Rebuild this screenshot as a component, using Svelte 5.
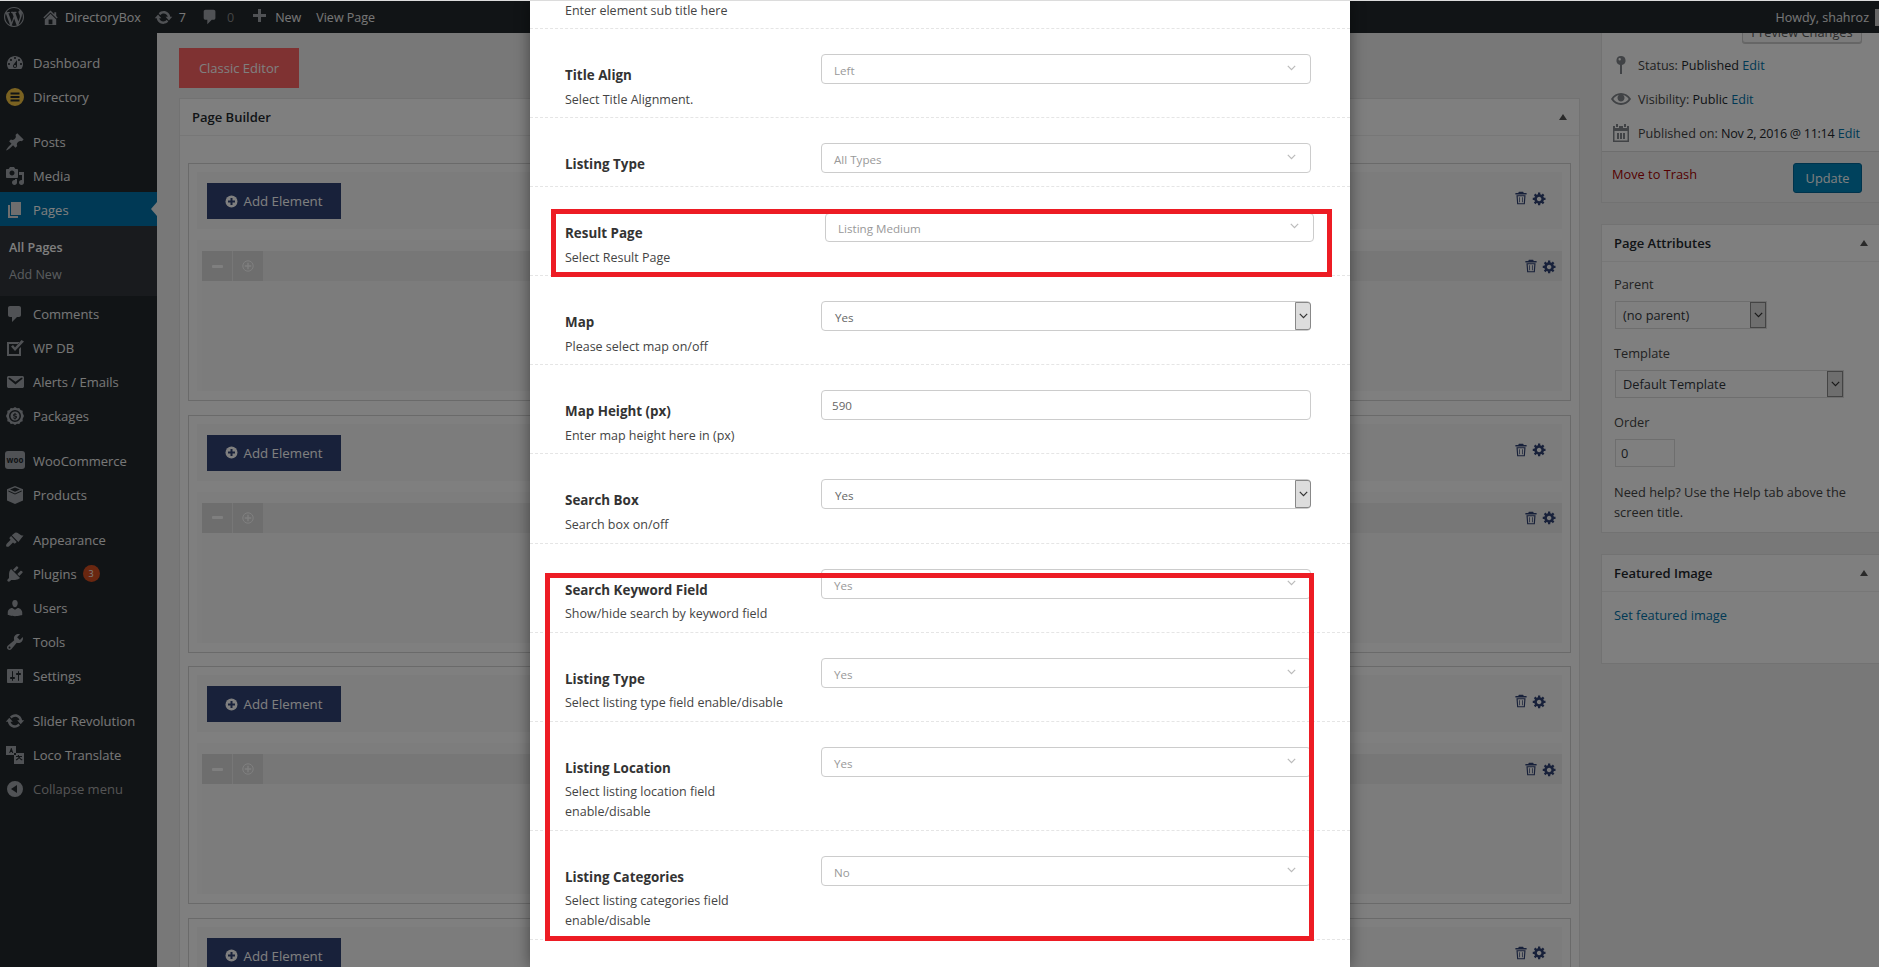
<script lang="ts">
	// WP page editor dimmed behind the "element settings" modal

	const icons: Record<string, string> = {
		dashboard: 'M3.76 16h12.48c1.1-1.37 1.76-3.11 1.76-5 0-4.42-3.58-8-8-8s-8 3.58-8 8c0 1.89.66 3.63 1.76 5zM10 4c.55 0 1 .45 1 1s-.45 1-1 1-1-.45-1-1 .45-1 1-1zM6 6c.55 0 1 .45 1 1s-.45 1-1 1-1-.45-1-1 .45-1 1-1zm8 0c.55 0 1 .45 1 1s-.45 1-1 1-1-.45-1-1 .45-1 1-1zm-5.37 5.55L12 7v6c0 1.1-.9 2-2 2s-2-.9-2-2c0-.57.24-1.08.63-1.45zM4 10c.55 0 1 .45 1 1s-.45 1-1 1-1-.45-1-1 .45-1 1-1zm12 0c.55 0 1 .45 1 1s-.45 1-1 1-1-.45-1-1 .45-1 1-1zm-5 3c0-.55-.45-1-1-1s-1 .45-1 1 .45 1 1 1 1-.45 1-1z',
		directory: 'M10 1a9 9 0 1 0 0 18 9 9 0 0 0 0-18zM5.5 5.5h9v2h-9zm0 3.5h9v2h-9zm0 3.5h9v2h-9z',
		pin: 'M10.44 3.02l1.82-1.82 6.36 6.35-1.83 1.82c-1.05-.68-2.48-.57-3.41.36l-.75.75c-.92.93-1.04 2.35-.35 3.41l-1.83 1.82-2.41-2.41-2.8 2.79c-.42.42-3.38 2.71-3.8 2.29s1.86-3.39 2.28-3.81l2.79-2.79L4.1 9.36l1.83-1.82c1.05.69 2.48.57 3.4-.36l.75-.75c.93-.92 1.05-2.35.36-3.41z',
		media: 'M13 11V4c0-.55-.45-1-1-1h-1.67L9 1H5L3.67 3H2c-.55 0-1 .45-1 1v7c0 .55.45 1 1 1h10c.55 0 1-.45 1-1zM7 4.5c1.38 0 2.5 1.12 2.5 2.5S8.38 9.5 7 9.5 4.5 8.38 4.5 7 5.62 4.5 7 4.5zM14 6h5v10.5c0 1.38-1.12 2.5-2.5 2.5S14 17.88 14 16.5s1.12-2.5 2.5-2.5c.17 0 .34.02.5.05V9h-3V6zm-4 8.05V13h2v3.5c0 1.38-1.12 2.5-2.5 2.5S7 17.88 7 16.5 8.12 14 9.5 14c.17 0 .34.02.5.05z',
		pages: 'M6 15V2h10v13H6zm-1 1h8v2H3V5h2v11z',
		comment: 'M5 2h9c1.1 0 2 .9 2 2v7c0 1.1-.9 2-2 2h-2l-5 5v-5H5c-1.1 0-2-.9-2-2V4c0-1.1.9-2 2-2z',
		check: 'M2 4h12v2H4v10h10v-5l2-2v9H2V4zm6 3l2 2.5L16.5 2 19 3.5 10 13 6 8.5z',
		email: 'M3.87 4h13.25C18.37 4 19 4.59 19 5.79v8.42c0 1.19-.63 1.79-1.88 1.79H3.87c-1.25 0-1.88-.6-1.88-1.79V5.79c0-1.2.63-1.79 1.88-1.79zm6.62 8.6l6.74-5.53c.24-.2.43-.66.13-1.07-.29-.41-.82-.42-1.17-.17l-5.7 3.86L4.8 5.83c-.35-.25-.88-.24-1.17.17-.3.41-.11.87.13 1.07z',
		packages: 'M10 1l2 1.2 2.3-.3 1.2 2 2.2.9-.1 2.3L19 10l-1.4 2.9.1 2.3-2.2.9-1.2 2-2.3-.3L10 19l-2-1.2-2.3.3-1.2-2-2.2-.9.1-2.3L1 10l1.4-2.9-.1-2.3 2.2-.9 1.2-2 2.3.3zm0 3a6 6 0 1 0 0 12 6 6 0 0 0 0-12zm0 1.5a4.5 4.5 0 1 1 0 9 4.5 4.5 0 0 1 0-9zM9.5 7v.7c-.9.2-1.4.8-1.4 1.5 0 1.7 2.6 1.1 2.6 2 0 .3-.3.5-.8.5s-1-.2-1.4-.5l-.4.9c.4.3.9.5 1.4.6v.8h1v-.8c.9-.2 1.5-.8 1.5-1.6 0-1.7-2.6-1.2-2.6-2 0-.3.3-.4.7-.4s.8.1 1.2.4l.4-.9c-.4-.3-.8-.4-1.2-.5V7z',
		products: 'M10 1l8 3.2v11.4L10 19l-8-3.4V4.2zM10 2.6L5 4.6l5 2.2 5-2.2zM3.4 5.6v1l6.6 2.8 6.6-2.8v-1L10 8.4z',
		brush: 'M18.5 5.5c-1.5.3-2.8-.4-3.9-1.2-1.2-.9-2-1.8-3.5-1.8-.9 0-1.4.4-2 1L6.8 5.3l6.6 6.6 5.1-6.4zM6.1 6l-1.4 1.4c-.4.4-.4 1 0 1.4l.9.9-3.4 3.6c-1 1-1.4 2.3-.8 3.1.7.8 2 .4 3-.5l3.6-3.5.9.9c.4.4 1 .4 1.4 0l1.4-1.4z',
		plugin: 'M13.11 4.36L9.87 7.6 8 5.73l3.24-3.24c.35-.34 1.05-.2 1.56.32.52.51.66 1.21.31 1.55zm-8 1.77l.91-1.12 9.01 9.01-1.19.84c-.71.71-2.63 1.16-3.82 1.16H6.14L4.9 17.26c-.59.59-1.54.59-2.12 0-.59-.58-.59-1.53 0-2.12l1.24-1.24v-3.88c0-1.13.4-3.19 1.09-3.89zm7.26 3.97l3.24-3.24c.34-.35 1.04-.21 1.55.31.52.51.66 1.21.31 1.55l-3.24 3.25z',
		users: 'M10 9.25c-2.27 0-2.73-3.44-2.73-3.44C7 4.02 7.82 2 9.97 2c2.16 0 2.98 2.02 2.71 3.81 0 0-.41 3.44-2.68 3.44zm0 2.57L12.72 10c2.39 0 4.52 2.33 4.52 4.53v2.49s-3.65 1.13-7.24 1.13c-3.65 0-7.24-1.13-7.24-1.13v-2.49c0-2.25 1.94-4.48 4.47-4.48z',
		tools: 'M16.68 9.77c-1.34 1.34-3.3 1.67-4.95.99l-5.41 6.52c-.99.99-2.59.99-3.58 0s-.99-2.59 0-3.57l6.52-5.42c-.68-1.65-.35-3.61.99-4.95 1.28-1.28 3.12-1.62 4.72-1.06l-2.89 2.89 2.82 2.82 2.86-2.87c.53 1.58.18 3.39-1.08 4.67zM3.81 16.21c.4.39 1.04.39 1.43 0 .4-.4.4-1.04 0-1.43-.39-.4-1.03-.4-1.43 0-.39.39-.39 1.03 0 1.43z',
		settings: 'M18 16V4c0-.55-.45-1-1-1H3c-.55 0-1 .45-1 1v12c0 .55.45 1 1 1h14c.55 0 1-.45 1-1zM8 11h1c.55 0 1 .45 1 1s-.45 1-1 1H8v1.5c0 .28-.22.5-.5.5s-.5-.22-.5-.5V13H6c-.55 0-1-.45-1-1s.45-1 1-1h1V5.5c0-.28.22-.5.5-.5s.5.22.5.5V11zm5-2h-1c-.55 0-1-.45-1-1s.45-1 1-1h1V5.5c0-.28.22-.5.5-.5s.5.22.5.5V7h1c.55 0 1 .45 1 1s-.45 1-1 1h-1v5.5c0 .28-.22.5-.5.5s-.5-.22-.5-.5V9z',
		update: 'M10.2 3.28c3.53 0 6.43 2.61 6.92 6h2.08l-3.5 4-3.5-4h2.32c-.45-1.97-2.21-3.45-4.32-3.45-1.45 0-2.73.71-3.54 1.78L4.95 5.66C6.23 4.2 8.11 3.28 10.2 3.28zm-.4 13.44c-3.52 0-6.43-2.61-6.92-6H.8l3.5-4c1.17 1.33 2.33 2.67 3.5 4H5.48c.45 1.97 2.21 3.45 4.32 3.45 1.45 0 2.73-.71 3.54-1.78l1.71 1.95c-1.28 1.46-3.15 2.38-5.25 2.38z',
		translate: 'M1 1h10v9H1zm3.2 7L6 3h.6l1.7 5H7.2l-.3-1H5.5l-.3 1zM9 8h10v11H9zm2 3v1h2.6c-.4.9-1.4 1.8-2.8 2.6l.5.9c1.3-.7 2.2-1.5 2.8-2.3.6.9 1.6 1.7 2.9 2.3l.5-.9c-1.4-.6-2.4-1.6-2.8-2.6H17v-1h-3v-1h-1.2v1z',
		collapse: 'M10 2a8 8 0 1 0 0 16 8 8 0 0 0 0-16zm2 4v8L6 10z',
		plus: 'M17 7v3h-5v5H9v-5H4V7h5V2h3v5h5z',
		home: 'M16 8.5l1.53 1.53-1.06 1.06L10 4.62l-6.47 6.47-1.06-1.06L10 2.5l4 4v-2h2v4zm-6-2.46l6 5.99V18H4v-5.97zM12 17v-5H8v5h4z',
		wp: 'M20 10c0-5.51-4.49-10-10-10C4.48 0 0 4.49 0 10c0 5.52 4.48 10 10 10 5.51 0 10-4.48 10-10zM7.78 15.37L4.37 6.22c.55-.02 1.17-.08 1.17-.08.5-.06.44-1.13-.06-1.11 0 0-1.45.11-2.37.11-.18 0-.37 0-.58-.01C4.12 2.69 6.87 1.11 10 1.11c2.33 0 4.45.87 6.05 2.34-.68-.11-1.65.39-1.65 1.58 0 .74.45 1.36.9 2.1.35.61.55 1.36.55 2.46 0 1.49-1.4 5-1.4 5l-3.03-8.37c.54-.02.82-.17.82-.17.5-.05.44-1.25-.06-1.22 0 0-1.44.12-2.38.12-.87 0-2.33-.12-2.33-.12-.5-.03-.56 1.2-.06 1.22l.92.08 1.26 3.41zM17.41 10c.24-.64.74-1.87.43-4.25.7 1.29 1.05 2.71 1.05 4.25 0 3.29-1.73 6.24-4.4 7.78.97-2.59 1.94-5.2 2.92-7.78zM6.1 18.09C3.12 16.65 1.11 13.53 1.11 10c0-1.3.23-2.48.72-3.59C3.25 10.3 4.67 14.2 6.1 18.09zm4.03-6.63l2.58 6.98c-.86.29-1.76.45-2.71.45-.79 0-1.57-.11-2.29-.33.81-2.38 1.62-4.74 2.42-7.1z',
		gear: 'M18 12h-2.18c-.17.7-.44 1.35-.81 1.93l1.54 1.54-2.1 2.1-1.54-1.54c-.58.36-1.23.63-1.91.79V19H8v-2.18c-.68-.16-1.33-.43-1.91-.79l-1.54 1.54-2.12-2.12 1.54-1.54c-.36-.58-.63-1.23-.79-1.91H1V9.03h2.17c.16-.7.44-1.35.8-1.94L2.43 5.55l2.1-2.1 1.54 1.54c.58-.37 1.24-.64 1.93-.81V2h3v2.18c.68.16 1.33.43 1.91.79l1.54-1.54 2.12 2.12-1.54 1.54c.36.59.64 1.24.8 1.94H18V12zm-8.5 1.5c1.66 0 3-1.34 3-3s-1.34-3-3-3-3 1.34-3 3 1.34 3 3 3z',
		trash: 'M7 1h6l1 2h4v2H2V3h4zM3.5 6h13l-1 13h-11zM5.3 7.5l.7 10h8l.7-10zM7.5 9h1v7h-1zm4 0h1v7h-1z',
		eye: 'M19.7 9.4C17.7 6 14 3.9 10 3.9S2.3 6 .3 9.4L0 10l.3.6c2 3.4 5.7 5.5 9.7 5.5s7.7-2.1 9.7-5.5l.3-.6-.3-.6zM10 14.1c-3.1 0-6-1.6-7.7-4.1C3.6 8 5.7 6.6 8 6.1c-.9.6-1.5 1.7-1.5 2.9 0 1.9 1.6 3.5 3.5 3.5s3.5-1.6 3.5-3.5c0-1.2-.6-2.2-1.5-2.9 2.3.5 4.4 1.9 5.7 3.9-1.7 2.5-4.6 4.1-7.7 4.1z',
		status: 'M10 1a4.5 4.5 0 0 0-1 8.9V19h2V9.9A4.5 4.5 0 0 0 10 1zM8.7 3a1.2 1.2 0 1 1 0 2.4 1.2 1.2 0 0 1 0-2.4z',
		calendar: 'M5 1h2v3H5zm8 0h2v3h-2zM2 3h2v2h4V3h4v2h4V3h2v16H2zm1.5 5v9.5h13V8zM6 10h2v6H6zm3 0h2v6H9zm3 0h2v6h-2z',
	};

	const menu = [
		{ label: 'Dashboard', icon: 'dashboard' },
		{ label: 'Directory', icon: 'directory', gold: true },
		{ sep: true },
		{ label: 'Posts', icon: 'pin' },
		{ label: 'Media', icon: 'media' },
		{ label: 'Pages', icon: 'pages', current: true },
		{ label: 'Comments', icon: 'comment' },
		{ label: 'WP DB', icon: 'check' },
		{ label: 'Alerts / Emails', icon: 'email' },
		{ label: 'Packages', icon: 'packages' },
		{ sep: true },
		{ label: 'WooCommerce', woo: true },
		{ label: 'Products', icon: 'products' },
		{ sep: true },
		{ label: 'Appearance', icon: 'brush' },
		{ label: 'Plugins', icon: 'plugin', badge: '3' },
		{ label: 'Users', icon: 'users' },
		{ label: 'Tools', icon: 'tools' },
		{ label: 'Settings', icon: 'settings' },
		{ sep: true },
		{ label: 'Slider Revolution', icon: 'update' },
		{ label: 'Loco Translate', icon: 'translate' },
		{ label: 'Collapse menu', icon: 'collapse', dim: true },
	];

	const rows = [
		{ label: 'Title Align', sub: 'Select Title Alignment.', value: 'Left', kind: 'chosen' },
		{ label: 'Listing Type', value: 'All Types', kind: 'chosen' },
		{ label: 'Result Page', sub: 'Select Result Page', value: 'Listing Medium', kind: 'chosen', pasted: true },
		{ label: 'Map', sub: 'Please select map on/off', value: 'Yes', kind: 'native' },
		{ label: 'Map Height (px)', sub: 'Enter map height here in (px)', value: '590', kind: 'input' },
		{ label: 'Search Box', sub: 'Search box on/off', value: 'Yes', kind: 'native' },
		{ label: 'Search Keyword Field', sub: 'Show/hide search by keyword field', value: 'Yes', kind: 'chosen' },
		{ label: 'Listing Type', sub: 'Select listing type field enable/disable', value: 'Yes', kind: 'chosen' },
		{ label: 'Listing Location', sub: 'Select listing location field enable/disable', value: 'Yes', kind: 'chosen' },
		{ label: 'Listing Categories', sub: 'Select listing categories field enable/disable', value: 'No', kind: 'chosen' },
	];

	const blocks = [1, 2, 3, 4];
</script>

{#snippet icon(name, size = 20)}
	<svg class="ico" width={size} height={size} viewBox="0 0 20 20" fill="currentColor" aria-hidden="true"><path fill-rule="evenodd" d={icons[name]} /></svg>
{/snippet}

{#snippet chevron()}
	<svg class="chev" width="9" height="6" viewBox="0 0 9 6" fill="none" stroke="currentColor" stroke-width="1.2" aria-hidden="true"><path d="M.8.8l3.7 3.9L8.2.8" /></svg>
{/snippet}

<div class="top-line"></div>
<div class="screen">
	<header class="adminbar">
		<span class="bar-item logo">{@render icon('wp', 20)}</span>
		<span class="bar-item home">{@render icon('home', 19)}<span>DirectoryBox</span></span>
		<span class="bar-item upd">{@render icon('update', 19)}<span>7</span></span>
		<span class="bar-item cmt">{@render icon('comment', 18)}<span class="zero">0</span></span>
		<span class="bar-item new">{@render icon('plus', 20)}<span>New</span></span>
		<span class="bar-item view">View Page</span>
		<span class="howdy">Howdy, shahroz</span>
		<span class="avatar"></span>
	</header>

	<div class="body">
		<nav class="sidebar">
			{#each menu as m}
				{#if m.sep}
					<div class="sep"></div>
				{:else}
					<div class="item" class:current={m.current} class:dim={m.dim}>
						{#if m.woo}
							<span class="woo"><span>woo</span></span>
						{:else}
							<span class="mi" class:gold={m.gold}>{@render icon(m.icon)}</span>
						{/if}
						<span>{m.label}</span>
						{#if m.badge}<span class="badge">{m.badge}</span>{/if}
					</div>
					{#if m.current}
						<div class="submenu">
							<div class="sub-item on">All Pages</div>
							<div class="sub-item">Add New</div>
						</div>
					{/if}
				{/if}
			{/each}
		</nav>

		<main class="content">
			<div class="left">
				<button class="classic">Classic Editor</button>
				<section class="panel builder">
					<div class="panel-head">
						<h2>Page Builder</h2>
						<span class="tri"></span>
					</div>
					<div class="builder-body">
						{#each blocks as b (b)}
							<div class="block">
								<div class="block-head">
									<button class="add">
										<svg width="13" height="13" viewBox="0 0 13 13" aria-hidden="true"><circle cx="6.5" cy="6.5" r="6" fill="currentColor" /><path d="M6.5 3v7M3 6.5h7" stroke="#304274" stroke-width="2" /></svg>
										Add Element
									</button>
									<span class="tools tools-head">{@render icon('trash', 14)}{@render icon('gear', 15)}</span>
								</div>
								<div class="block-row">
									<div class="row-bar">
										<span class="mini">
											<svg width="11" height="3" viewBox="0 0 11 3" aria-hidden="true"><rect width="11" height="3" rx="1" fill="currentColor" /></svg>
										</span>
										<span class="mini">
											<svg width="12" height="12" viewBox="0 0 12 12" fill="none" stroke="currentColor" aria-hidden="true"><circle cx="6" cy="6" r="5.2" /><path d="M6 2.8v6.4M2.8 6h6.4" stroke-width="1.4" /></svg>
										</span>
										<span class="tools tools-row">{@render icon('trash', 14)}{@render icon('gear', 15)}</span>
									</div>
									<div class="row-area"></div>
								</div>
							</div>
						{/each}
					</div>
				</section>
			</div>

			<aside class="right">
				<section class="panel publish">
					<div class="preview-wrap"><button class="preview">Preview Changes</button></div>
					<div class="meta">{@render icon('status', 20)}<span>Status: <b>Published</b> <a href="#s">Edit</a></span></div>
					<div class="meta">{@render icon('eye', 20)}<span>Visibility: <b>Public</b> <a href="#v">Edit</a></span></div>
					<div class="meta">{@render icon('calendar', 20)}<span>Published on: <b class="date">Nov 2, 2016 @ 11:14</b> <a href="#p">Edit</a></span></div>
					<div class="actions">
						<a class="trash-link" href="#t">Move to Trash</a>
						<button class="update">Update</button>
					</div>
				</section>

				<section class="panel attrs">
					<div class="panel-head">
						<h2>Page Attributes</h2>
						<span class="tri"></span>
					</div>
					<div class="attrs-body">
						<p class="field">Parent</p>
						<div class="wp-select parent"><span>(no parent)</span><span class="arrow">{@render chevron()}</span></div>
						<p class="field">Template</p>
						<div class="wp-select template"><span>Default Template</span><span class="arrow">{@render chevron()}</span></div>
						<p class="field">Order</p>
						<div class="order">0</div>
						<p class="help">Need help? Use the Help tab above the screen title.</p>
					</div>
				</section>

				<section class="panel featured">
					<div class="panel-head">
						<h2>Featured Image</h2>
						<span class="tri"></span>
					</div>
					<div class="featured-body"><a href="#f">Set featured image</a></div>
				</section>
			</aside>
		</main>
	</div>

	<div class="overlay"></div>

	<div class="modal" role="dialog" aria-modal="true">
		<div class="row cut"><p class="sub">Enter element sub title here</p></div>
		{#each rows as r}
			<div class="row">
				<div class="row-label">
					<div class="name">{r.label}</div>
					{#if r.sub}<p class="sub">{r.sub}</p>{/if}
				</div>
				<div class="row-field">
					{#if r.kind === 'input'}
						<div class="control input">{r.value}</div>
					{:else if r.kind === 'native'}
						<div class="control native"><span>{r.value}</span><span class="arrow">{@render chevron()}</span></div>
					{:else}
						<div class="control chosen" class:pasted={r.pasted}><span>{r.value}</span>{@render chevron()}</div>
					{/if}
				</div>
			</div>
		{/each}
	</div>

	<div class="mark mark-result"></div>
	<div class="mark mark-search"></div>
</div>

<style>
	:global(body) {
		margin: 0;
		background: #787878;
	}

	.top-line {
		height: 1px;
		background: #dcdcdc;
	}

	.screen {
		position: relative;
		height: 966px;
		overflow: hidden;
		background: #f1f1f1;
		font-family: 'Open Sans', sans-serif;
		font-size: 12.8px;
		color: #444;
	}

	.ico {
		display: block;
		flex: none;
	}

	/* admin bar */
	.adminbar {
		position: relative;
		z-index: 2;
		display: flex;
		align-items: center;
		height: 32px;
		background: #23282d;
		color: #eee;
		font-size: 12.5px;
	}

	.bar-item {
		display: flex;
		align-items: center;
		flex: none;
	}

	.bar-item .ico {
		color: #a0a5aa;
	}

	.logo {
		margin-left: 4px;
	}

	.home {
		margin-left: 17px;
		gap: 5px;
	}

	.upd {
		margin-left: 13px;
		gap: 6px;
	}

	.cmt {
		margin-left: 15px;
		gap: 8px;
	}

	.zero {
		color: #888;
	}

	.new {
		margin-left: 15px;
		gap: 6px;
	}

	.view {
		margin-left: 15px;
	}

	.howdy {
		margin-left: auto;
	}

	.avatar {
		width: 10px;
		height: 17px;
		margin: 0 -6px 0 6px;
		background: #ccc;
	}

	/* layout */
	.body {
		display: flex;
		min-height: 934px;
	}

	.sidebar {
		flex: none;
		width: 157px;
		padding-top: 12px;
		background: #23282d;
		color: #eee;
		font-size: 13px;
	}

	.item {
		position: relative;
		display: flex;
		align-items: center;
		height: 34px;
		padding: 1px 0 0 5px;
		box-sizing: border-box;
	}

	.item .mi,
	.woo {
		display: flex;
		justify-content: center;
		flex: none;
		width: 20px;
		margin-right: 8px;
		color: #a0a5aa;
	}

	.mi.gold {
		color: #f4c542;
	}

	.woo {
		position: relative;
		height: 18px;
		margin-top: -2px;
		border-radius: 3px;
		background: #a0a5aa;
		color: #23282d;
		font-size: 8px;
		font-weight: 700;
		line-height: 17px;
		text-align: center;
	}

	.sep {
		height: 11px;
	}

	.current {
		background: #0073aa;
		color: #fff;
	}

	.current .mi {
		color: #ddd;
	}

	.current::after {
		content: '';
		position: absolute;
		right: 0;
		top: 10px;
		border: 7px solid transparent;
		border-right: 6px solid #f1f1f1;
		border-left: 0;
	}

	.dim {
		color: #aaa;
	}

	.badge {
		width: 17px;
		height: 17px;
		margin-left: 6px;
		border-radius: 50%;
		background: #d54e21;
		color: #fff;
		font-size: 9px;
		line-height: 17px;
		text-align: center;
	}

	.submenu {
		height: 70px;
		padding-top: 8px;
		box-sizing: border-box;
		background: #32373c;
		font-size: 12.5px;
		color: rgba(240, 245, 250, 0.7);
	}

	.sub-item {
		height: 27px;
		padding-left: 9px;
		line-height: 27px;
	}

	.sub-item.on {
		color: #fff;
		font-weight: 600;
	}

	.content {
		display: flex;
		flex: 1;
		min-width: 0;
		gap: 21px;
		padding-left: 22px;
	}

	.left {
		flex: none;
		width: 1401px;
		padding-top: 15px;
	}

	.classic {
		display: block;
		width: 120px;
		height: 40px;
		border: 0;
		background: #ff6464;
		color: #fff;
		font: 13px 'Open Sans', sans-serif;
	}

	.panel {
		border: 1px solid #e5e5e5;
		box-sizing: border-box;
		background: #fff;
	}

	.panel-head {
		display: flex;
		align-items: center;
		justify-content: space-between;
		height: 36px;
		padding: 0 12px;
		border-bottom: 1px solid #eee;
	}

	.panel-head h2 {
		margin: 0;
		font-size: 13px;
		font-weight: 600;
		color: #23282d;
	}

	.tri {
		width: 0;
		border: 4px solid transparent;
		border-bottom: 6px solid #555;
		border-top: 0;
	}

	.builder {
		margin-top: 10px;
	}

	.builder-body {
		padding: 27px 8px 0;
	}

	.block {
		height: 238px;
		margin-bottom: 13.6px;
		padding: 8px 8px 0;
		border: 1px solid #d4d4d4;
		box-sizing: border-box;
	}

	.block-head {
		display: flex;
		justify-content: space-between;
		height: 57px;
		padding: 11px 0 0 10px;
		box-sizing: border-box;
		background: #f9f9f9;
	}

	.add {
		display: flex;
		align-items: center;
		justify-content: center;
		gap: 5px;
		width: 134px;
		height: 36px;
		padding: 0;
		border: 0;
		background: #304274;
		color: #fff;
		font: 13.3px 'Open Sans', sans-serif;
	}

	.tools {
		display: flex;
		align-items: center;
		gap: 4px;
		color: #304274;
	}

	.tools-head {
		height: 30px;
		padding-right: 15px;
	}

	.tools-row {
		margin-left: auto;
		padding-right: 5px;
	}

	.block-row {
		height: 151px;
		margin-top: 11px;
		padding: 11px 0 0 5px;
		box-sizing: border-box;
		background: #fbfbfb;
	}

	.row-bar {
		display: flex;
		gap: 1px;
		height: 30px;
		background: #eee;
	}

	.mini {
		display: flex;
		align-items: center;
		justify-content: center;
		width: 30px;
		background: #ddd;
		color: #fff;
	}

	.row-area {
		height: 110px;
		background: #f8f8f8;
	}

	.right {
		flex: 1;
		min-width: 0;
		margin-right: -2px;
	}

	.publish {
		height: 188px;
		margin-top: -18px;
		position: relative;
	}

	.preview-wrap {
		display: flex;
		justify-content: flex-end;
		align-items: flex-end;
		height: 32px;
		padding: 0 18px 5px 0;
		box-sizing: border-box;
	}

	.preview {
		width: 120px;
		height: 26px;
		padding: 3px 0 0;
		border: 1px solid #ccc;
		border-radius: 3px;
		background: #f7f7f7;
		box-shadow: 0 1px 0 #ccc;
		color: #555;
		font: 12.8px 'Open Sans', sans-serif;
	}

	.meta {
		display: flex;
		align-items: center;
		gap: 7px;
		height: 34px;
		padding-left: 9px;
		font-size: 12.6px;
	}

	.meta .ico {
		color: #82878c;
	}

	.meta b {
		font-weight: 500;
		color: #23282d;
	}

	.meta .date {
		letter-spacing: -0.3px;
	}

	a {
		color: #0073aa;
		text-decoration: none;
	}

	.actions {
		display: flex;
		align-items: flex-start;
		justify-content: space-between;
		height: 51px;
		margin-top: 1px;
		padding: 11px 18px 0 10px;
		border-top: 1px solid #ddd;
		background: #f5f5f5;
		box-sizing: border-box;
	}

	.trash-link {
		margin-top: 2px;
		color: #a00;
	}

	.update {
		width: 69px;
		height: 30px;
		padding: 0;
		border: 1px solid #006799;
		border-radius: 3px;
		background: #0085ba;
		color: #fff;
		font: 12.8px 'Open Sans', sans-serif;
	}

	.attrs {
		height: 309px;
		margin-top: 21px;
	}

	.attrs-body {
		padding: 12px 12px;
	}

	.field {
		margin: 0;
		line-height: 20px;
	}

	.wp-select {
		display: flex;
		align-items: center;
		justify-content: space-between;
		height: 28px;
		margin: 7px 0 14px 1px;
		padding-left: 7px;
		border: 1px solid #ddd;
		box-sizing: border-box;
		color: #32373c;
	}

	.wp-select .arrow,
	.native .arrow {
		display: flex;
		align-items: center;
		justify-content: center;
		flex: none;
		width: 16px;
		height: 100%;
		border: 1px solid #888;
		box-sizing: border-box;
		background: #ddd;
		color: #333;
	}

	.parent {
		width: 152px;
	}

	.template {
		width: 229px;
	}

	.order {
		width: 60px;
		height: 28px;
		margin: 7px 0 15px 1px;
		padding-left: 5px;
		border: 1px solid #ddd;
		box-sizing: border-box;
		line-height: 26px;
		color: #32373c;
	}

	.help {
		margin: 0;
		line-height: 20px;
	}

	.featured {
		height: 110px;
		margin-top: 21px;
	}

	.featured-body {
		padding: 14px 12px;
	}

	/* dim layer + modal */
	.overlay {
		position: absolute;
		inset: 0;
		z-index: 3;
		background: rgba(0, 0, 0, 0.5);
	}

	.modal {
		position: absolute;
		top: 0;
		bottom: 0;
		left: 530px;
		z-index: 4;
		width: 820px;
		background: #fff;
		box-shadow: 0 0 14px rgba(0, 0, 0, 0.45);
		color: #333;
	}

	.row {
		display: grid;
		grid-template-columns: 291px 490px;
		border-bottom: 1px dashed #e5e5e5;
	}

	.row.cut {
		display: block;
		height: 28px;
		padding-left: 35px;
		box-sizing: border-box;
	}

	.row-label {
		padding: 36px 26px 7.5px 35px;
	}

	.name {
		margin-bottom: 4.6px;
		font-size: 13.4px;
		font-weight: 700;
		line-height: 20px;
		color: #333;
	}

	.sub {
		margin: 0;
		font-size: 12.5px;
		line-height: 20px;
		color: #444;
	}

	.row-field {
		padding-top: 25px;
	}

	.control {
		display: flex;
		align-items: center;
		justify-content: space-between;
		height: 30px;
		border: 1px solid #ccc;
		border-radius: 4px;
		box-sizing: border-box;
		background: #fff;
		font-size: 11.6px;
	}

	.chosen {
		padding: 3px 14px 0 12px;
		color: #999;
	}

	.chosen .chev {
		margin-top: -5px;
		color: #bbb;
	}

	.chosen.pasted {
		width: 489px;
		height: 29px;
		padding-top: 2px;
		transform: translate(4px, 1px);
	}

	.native {
		padding-left: 13px;
		color: #666;
	}

	.native > span:first-child {
		padding-top: 2px;
	}

	.native .arrow {
		border-radius: 0 3px 3px 0;
		margin-right: -1px;
	}

	.input {
		padding: 0 0 0 10px;
		color: #666;
	}

	.mark {
		position: absolute;
		z-index: 5;
		border: 5px solid #ed1c24;
		box-sizing: border-box;
	}

	.mark-result {
		left: 551px;
		top: 208px;
		width: 781px;
		height: 68px;
	}

	.mark-search {
		left: 545px;
		top: 572px;
		width: 769px;
		height: 368px;
	}
</style>
